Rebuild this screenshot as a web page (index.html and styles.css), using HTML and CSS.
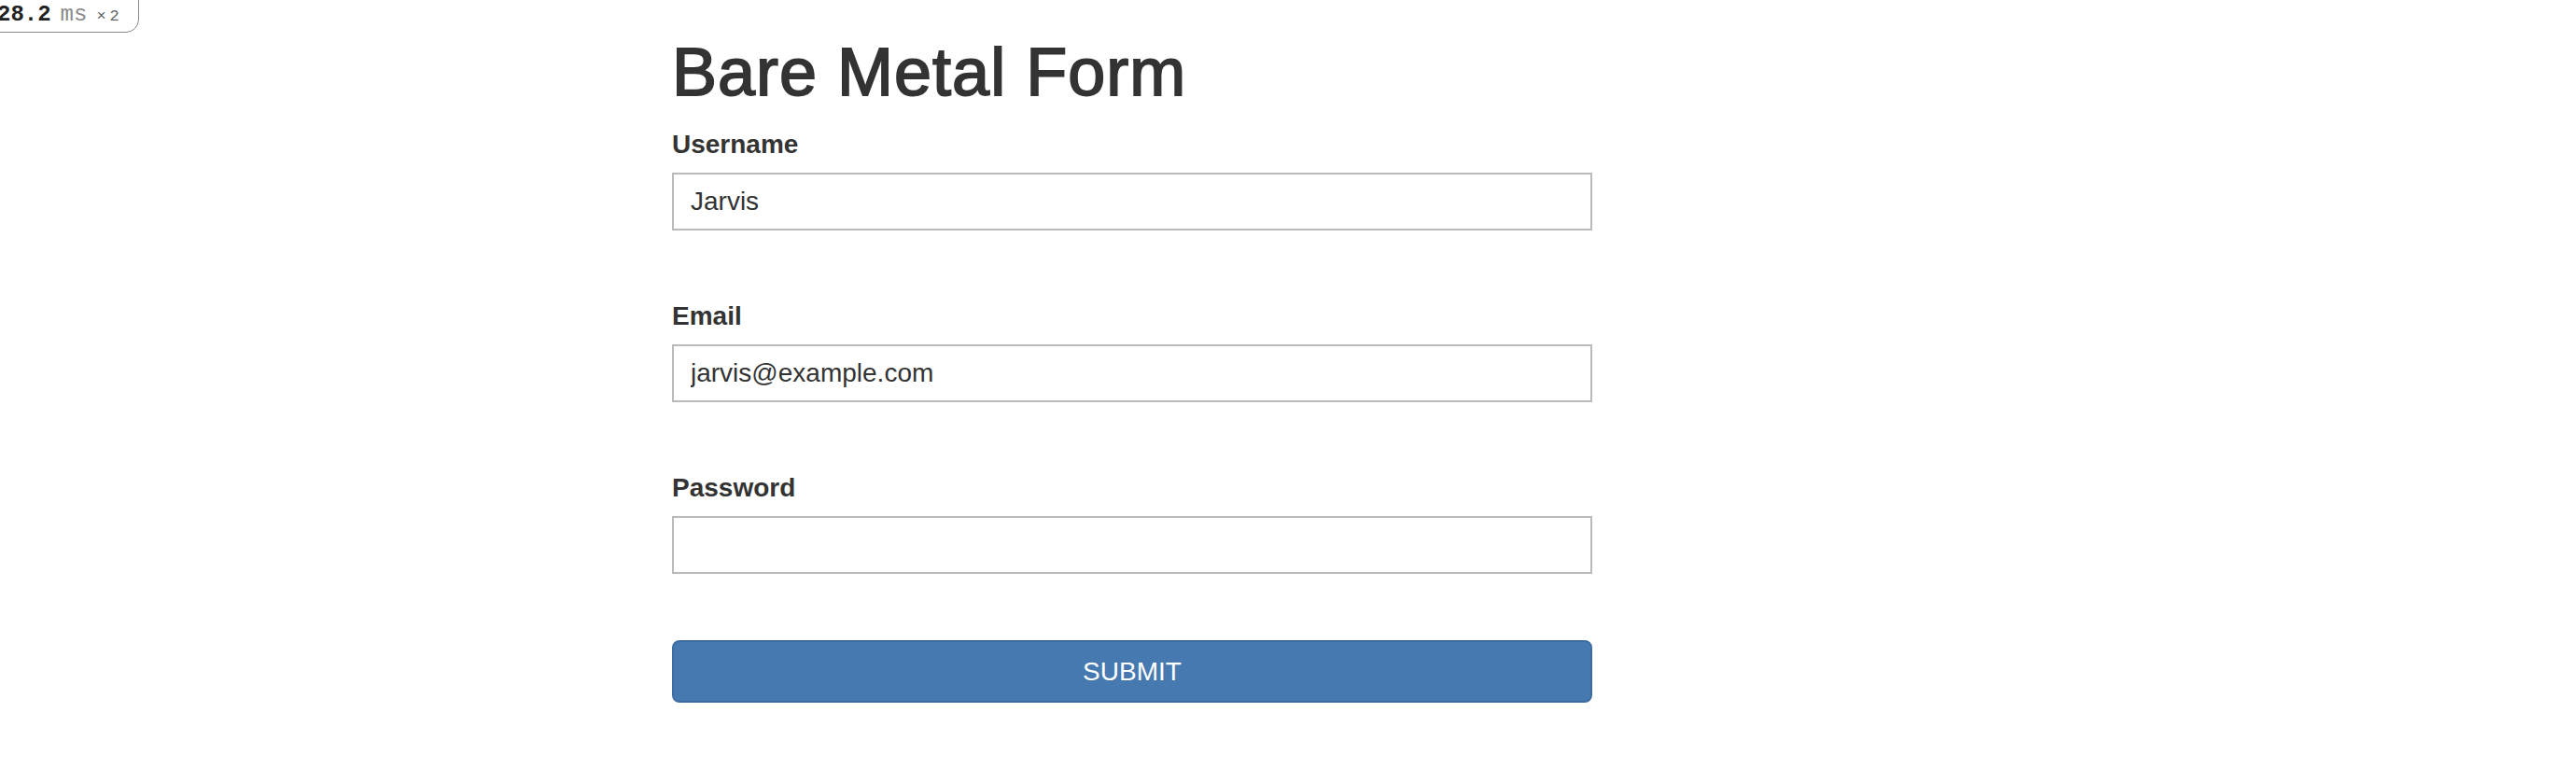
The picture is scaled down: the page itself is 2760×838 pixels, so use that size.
FILE: index.html
```html
<!DOCTYPE html>
<html lang="en">
<head>
<meta charset="utf-8">
<title>Bare Metal Form</title>
<link rel="stylesheet" href="styles.css">
</head>
<body>
<div class="stats"><span class="stats-value">28.2</span><span class="stats-unit">ms</span><span class="stats-count">×2</span></div>
<main class="page">
  <h1 class="title">Bare Metal Form</h1>
  <form class="form">
    <div class="field">
      <label class="label" for="username">Username</label>
      <input class="input" id="username" type="text" value="Jarvis">
    </div>
    <div class="field">
      <label class="label" for="email">Email</label>
      <input class="input" id="email" type="email" value="jarvis@example.com">
    </div>
    <div class="field">
      <label class="label" for="password">Password</label>
      <input class="input" id="password" type="password" value="">
    </div>
    <button class="submit" type="button">SUBMIT</button>
  </form>
</main>
</body>
</html>
```
FILE: styles.css
```css
html, body {
  margin: 0;
  padding: 0;
  background: #ffffff;
}

body {
  font-family: "Liberation Sans", Arial, Helvetica, sans-serif;
  color: #333333;
}

.stats {
  position: absolute;
  top: -2px;
  left: -4px;
  display: flex;
  align-items: baseline;
  gap: 10px;
  height: 37px;
  padding: 5px 16px 0 0;
  box-sizing: border-box;
  border: 1px solid #8a8a8a;
  border-radius: 0 0 14px 0;
  background: #ffffff;
  font-family: "Liberation Mono", "Courier New", monospace;
  line-height: 24px;
}

.stats-value {
  font-size: 24px;
  font-weight: bold;
  color: #222222;
}

.stats-unit {
  font-size: 24px;
  color: #8a8a8a;
}

.stats-count {
  font-size: 17px;
  letter-spacing: 4px;
  color: #666666;
}

.page {
  margin-left: 720px;
  width: 986px;
  padding-top: 37px;
}

.title {
  margin: 0 0 22px 0;
  font-size: 72px;
  line-height: 80px;
  font-weight: normal;
  color: #333333;
  letter-spacing: 1px;
  -webkit-text-stroke: 1.8px #333333;
}

.form {
  display: flex;
  flex-direction: column;
  gap: 76px;
}

.field {
  display: flex;
  flex-direction: column;
  gap: 14px;
}

.label {
  font-size: 28px;
  line-height: 32px;
  font-weight: bold;
  color: #333333;
}

.input {
  box-sizing: border-box;
  width: 100%;
  height: 62px;
  margin: 0;
  padding: 0 18px;
  border: 2px solid #bbbbbb;
  border-radius: 0;
  background: #ffffff;
  font-family: "Liberation Sans", Arial, Helvetica, sans-serif;
  font-size: 28px;
  color: #333333;
  outline: none;
}

.submit {
  box-sizing: border-box;
  width: 100%;
  height: 67px;
  margin: -5px 0 0 0;
  padding: 0;
  border: 2px solid #3d6ca3;
  border-radius: 8px;
  background: #4779b1;
  font-family: "Liberation Sans", Arial, Helvetica, sans-serif;
  font-size: 28px;
  color: #ffffff;
  cursor: pointer;
}
```
